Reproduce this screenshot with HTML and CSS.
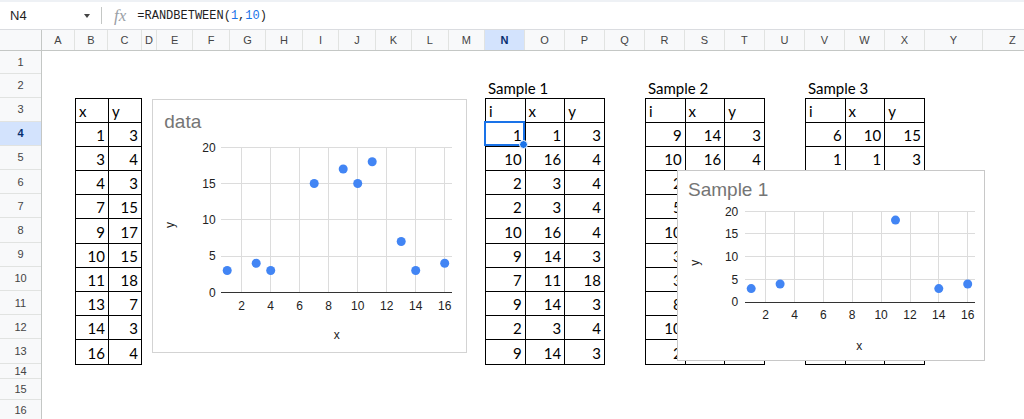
FILE: index.html
```html
<!DOCTYPE html>
<html lang="en">
<head>
<meta charset="utf-8">
<title>Sheet</title>
<link rel="stylesheet" href="styles.css">
</head>
<body>
<div class="topstrip"></div>
<div class="formula-bar">
  <div class="namebox"><span class="cellref">N4</span><span class="caret"></span></div>
  <div class="fsep"></div>
  <span class="fx">fx</span>
  <div class="formula">=RANDBETWEEN(<span class="num">1</span>,<span class="num">10</span>)</div>
</div>
<div class="sheet">
  <div class="corner"></div>
  <div class="colheads">
    <div class="ch">A</div><div class="ch">B</div><div class="ch">C</div><div class="ch">D</div>
    <div class="ch">E</div><div class="ch">F</div><div class="ch">G</div><div class="ch">H</div>
    <div class="ch">I</div><div class="ch">J</div><div class="ch">K</div><div class="ch">L</div>
    <div class="ch">M</div><div class="ch active">N</div><div class="ch">O</div><div class="ch">P</div>
    <div class="ch">Q</div><div class="ch">R</div><div class="ch">S</div><div class="ch">T</div>
    <div class="ch">U</div><div class="ch">V</div><div class="ch">W</div><div class="ch">X</div>
    <div class="ch">Y</div><div class="ch">Z</div>
  </div>
  <div class="rowheads">
    <div class="rh">1</div><div class="rh">2</div><div class="rh">3</div><div class="rh active">4</div>
    <div class="rh">5</div><div class="rh">6</div><div class="rh">7</div><div class="rh">8</div>
    <div class="rh">9</div><div class="rh">10</div><div class="rh">11</div><div class="rh">12</div>
    <div class="rh">13</div><div class="rh">14</div><div class="rh">15</div><div class="rh">16</div>
  </div>
  <div class="body">
    <table class="dt t-left">
      <tr><td class="h">x</td><td class="h">y</td></tr>
      <tr><td>1</td><td>3</td></tr>
      <tr><td>3</td><td>4</td></tr>
      <tr><td>4</td><td>3</td></tr>
      <tr><td>7</td><td>15</td></tr>
      <tr><td>9</td><td>17</td></tr>
      <tr><td>10</td><td>15</td></tr>
      <tr><td>11</td><td>18</td></tr>
      <tr><td>13</td><td>7</td></tr>
      <tr><td>14</td><td>3</td></tr>
      <tr><td>16</td><td>4</td></tr>
    </table>

    <div class="label l-s1">Sample 1</div>
    <table class="dt t-s1">
      <tr><td class="h">i</td><td class="h">x</td><td class="h">y</td></tr>
      <tr><td>1</td><td>1</td><td>3</td></tr>
      <tr><td>10</td><td>16</td><td>4</td></tr>
      <tr><td>2</td><td>3</td><td>4</td></tr>
      <tr><td>2</td><td>3</td><td>4</td></tr>
      <tr><td>10</td><td>16</td><td>4</td></tr>
      <tr><td>9</td><td>14</td><td>3</td></tr>
      <tr><td>7</td><td>11</td><td>18</td></tr>
      <tr><td>9</td><td>14</td><td>3</td></tr>
      <tr><td>2</td><td>3</td><td>4</td></tr>
      <tr><td>9</td><td>14</td><td>3</td></tr>
    </table>

    <div class="label l-s2">Sample 2</div>
    <table class="dt t-s2">
      <tr><td class="h">i</td><td class="h">x</td><td class="h">y</td></tr>
      <tr><td>9</td><td>14</td><td>3</td></tr>
      <tr><td>10</td><td>16</td><td>4</td></tr>
      <tr><td>2</td><td></td><td></td></tr>
      <tr><td>5</td><td></td><td></td></tr>
      <tr><td>10</td><td></td><td></td></tr>
      <tr><td>3</td><td></td><td></td></tr>
      <tr><td>3</td><td></td><td></td></tr>
      <tr><td>8</td><td></td><td></td></tr>
      <tr><td>10</td><td></td><td></td></tr>
      <tr><td>2</td><td></td><td></td></tr>
    </table>

    <div class="label l-s3">Sample 3</div>
    <table class="dt t-s3">
      <tr><td class="h">i</td><td class="h">x</td><td class="h">y</td></tr>
      <tr><td>6</td><td>10</td><td>15</td></tr>
      <tr><td>1</td><td>1</td><td>3</td></tr>
      <tr><td></td><td></td><td></td></tr>
      <tr><td></td><td></td><td></td></tr>
      <tr><td></td><td></td><td></td></tr>
      <tr><td></td><td></td><td></td></tr>
      <tr><td></td><td></td><td></td></tr>
      <tr><td></td><td></td><td></td></tr>
      <tr><td></td><td></td><td></td></tr>
      <tr><td></td><td></td><td></td></tr>
    </table>

    <div class="selection"><span class="handle"></span></div>

    <div class="chart chart-data">
      <svg width="313" height="252" viewBox="0 0 313 252">
        <text class="ctitle" x="11.3" y="28.3">data</text>
        <g class="grid">
          <line x1="68" x2="299" y1="47.5" y2="47.5"/>
          <line x1="68" x2="299" y1="83.5" y2="83.5"/>
          <line x1="68" x2="299" y1="119.5" y2="119.5"/>
          <line x1="68" x2="299" y1="156.5" y2="156.5"/>
          <line x1="88.5" x2="88.5" y1="47" y2="192"/>
          <line x1="117.5" x2="117.5" y1="47" y2="192"/>
          <line x1="146.5" x2="146.5" y1="47" y2="192"/>
          <line x1="175.5" x2="175.5" y1="47" y2="192"/>
          <line x1="204.5" x2="204.5" y1="47" y2="192"/>
          <line x1="233.5" x2="233.5" y1="47" y2="192"/>
          <line x1="262.5" x2="262.5" y1="47" y2="192"/>
          <line x1="291.5" x2="291.5" y1="47" y2="192"/>
        </g>
        <line class="axis" x1="68" x2="299" y1="192.5" y2="192.5"/>
        <g class="yl">
          <text x="62.7" y="51.5">20</text>
          <text x="62.7" y="87.7">15</text>
          <text x="62.7" y="124">10</text>
          <text x="62.7" y="160.2">5</text>
          <text x="62.7" y="196.5">0</text>
        </g>
        <g class="xl">
          <text x="88.7" y="210">2</text>
          <text x="117.7" y="210">4</text>
          <text x="146.7" y="210">6</text>
          <text x="175.7" y="210">8</text>
          <text x="204.7" y="210">10</text>
          <text x="233.7" y="210">12</text>
          <text x="262.7" y="210">14</text>
          <text x="291.7" y="210">16</text>
        </g>
        <text class="at" x="183.7" y="238.5">x</text>
        <text class="at" transform="translate(21,125) rotate(-90)">y</text>
        <g class="pts">
          <circle cx="74.2" cy="170.55" r="4.5"/>
          <circle cx="103.2" cy="163.3" r="4.5"/>
          <circle cx="117.7" cy="170.55" r="4.5"/>
          <circle cx="161.2" cy="83.55" r="4.5"/>
          <circle cx="190.2" cy="69.05" r="4.5"/>
          <circle cx="204.7" cy="83.55" r="4.5"/>
          <circle cx="219.2" cy="61.8" r="4.5"/>
          <circle cx="248.2" cy="141.55" r="4.5"/>
          <circle cx="262.7" cy="170.55" r="4.5"/>
          <circle cx="291.7" cy="163.3" r="4.5"/>
        </g>
      </svg>
    </div>

    <div class="chart chart-s1">
      <svg width="306" height="189" viewBox="0 0 306 189">
        <text class="ctitle" x="10" y="24.7">Sample 1</text>
        <g class="grid">
          <line x1="67" x2="297" y1="40.5" y2="40.5"/>
          <line x1="67" x2="297" y1="62.5" y2="62.5"/>
          <line x1="67" x2="297" y1="85.5" y2="85.5"/>
          <line x1="67" x2="297" y1="108.5" y2="108.5"/>
          <line x1="87.5" x2="87.5" y1="40" y2="131"/>
          <line x1="116.5" x2="116.5" y1="40" y2="131"/>
          <line x1="145.5" x2="145.5" y1="40" y2="131"/>
          <line x1="174.5" x2="174.5" y1="40" y2="131"/>
          <line x1="203.5" x2="203.5" y1="40" y2="131"/>
          <line x1="232.5" x2="232.5" y1="40" y2="131"/>
          <line x1="260.5" x2="260.5" y1="40" y2="131"/>
          <line x1="289.5" x2="289.5" y1="40" y2="131"/>
        </g>
        <line class="axis" x1="67" x2="297" y1="131.5" y2="131.5"/>
        <g class="yl">
          <text x="60.3" y="44.5">20</text>
          <text x="60.3" y="66.8">15</text>
          <text x="60.3" y="89.7">10</text>
          <text x="60.3" y="112.5">5</text>
          <text x="60.3" y="135.3">0</text>
        </g>
        <g class="xl">
          <text x="87.7" y="148">2</text>
          <text x="116.5" y="148">4</text>
          <text x="145.4" y="148">6</text>
          <text x="174.2" y="148">8</text>
          <text x="203.1" y="148">10</text>
          <text x="232" y="148">12</text>
          <text x="260.8" y="148">14</text>
          <text x="289.7" y="148">16</text>
        </g>
        <text class="at" x="181.3" y="178.5">x</text>
        <text class="at" transform="translate(21,91.7) rotate(-90)">y</text>
        <g class="pts">
          <circle cx="73.2" cy="117.6" r="4.5"/>
          <circle cx="102.1" cy="113" r="4.5"/>
          <circle cx="217.5" cy="49.1" r="4.5"/>
          <circle cx="260.8" cy="117.6" r="4.5"/>
          <circle cx="289.7" cy="113" r="4.5"/>
        </g>
      </svg>
    </div>
  </div>
</div>
</body>
</html>
```

FILE: styles.css
```css
* { box-sizing: border-box; }
html, body { margin: 0; padding: 0; }
body {
  width: 1024px;
  height: 419px;
  overflow: hidden;
  background: #fff;
  font-family: "Liberation Sans", Arial, sans-serif;
  color: #1f1f1f;
}

.topstrip { height: 2px; background: #eef1f5; }

.formula-bar {
  height: 28px;
  display: flex;
  align-items: center;
  border-bottom: 1px solid #dadce0;
}
.namebox {
  width: 101px;
  display: flex;
  align-items: center;
  padding-left: 10px;
}
.cellref { flex: 1; font-size: 13px; color: #1f1f1f; }
.caret {
  width: 0; height: 0;
  border-left: 3.5px solid transparent;
  border-right: 3.5px solid transparent;
  border-top: 4px solid #444;
  margin-right: 11px;
}
.fsep { width: 1px; height: 17px; background: #c4c7c5; }
.fx {
  font-family: "Liberation Serif", serif;
  font-style: italic;
  font-size: 17px;
  color: #9aa0a6;
  margin-left: 12px;
}
.formula {
  margin-left: 11px;
  font-family: "Liberation Mono", "DejaVu Sans Mono", monospace;
  font-size: 12px;
  color: #1f1f1f;
}
.num { color: #1a73e8; }

.sheet {
  --cols: 33px 33px 34px 15px repeat(9, 36.44px) repeat(11, 40px) 58px 60px;
  --rows: 23.25px 23.25px repeat(11, 24.2px) 15px 21px 21px;
  display: grid;
  grid-template-columns: 42px 1fr;
  grid-template-rows: 21px 1fr;
  height: 389px;
}
.corner {
  background: #f8f9fa;
  border-right: 1px solid #c4c7c5;
  border-bottom: 1px solid #c4c7c5;
}
.colheads {
  display: grid;
  grid-template-columns: var(--cols);
  background: #f8f9fa;
  border-bottom: 1px solid #c4c7c5;
  overflow: hidden;
}
.ch {
  border-right: 1px solid #e1e3e1;
  font-size: 11px;
  color: #444;
  display: flex;
  align-items: center;
  justify-content: center;
}
.ch.active, .rh.active {
  background: #d3e3fd;
  color: #062e6f;
  font-weight: bold;
}
.rowheads {
  display: grid;
  grid-template-rows: var(--rows);
  background: #f8f9fa;
  border-right: 1px solid #c4c7c5;
  overflow: hidden;
}
.rh {
  border-bottom: 1px solid #e1e3e1;
  font-size: 11px;
  color: #444;
  display: flex;
  align-items: center;
  justify-content: center;
}

.body {
  position: relative;
  display: grid;
  grid-template-columns: var(--cols);
  grid-template-rows: var(--rows);
  overflow: hidden;
  font-family: Lato, "Open Sans", sans-serif;
  font-size: 15px;
  color: #000;
}

.dt {
  border-collapse: collapse;
  table-layout: fixed;
  width: 100%;
  height: 100%;
}
.dt tr { height: 24.2px; }
.dt td {
  border: 1px solid #000;
  padding: 0 3px 3px;
  vertical-align: bottom;
  text-align: right;
  line-height: 1;
}
.dt td.h { text-align: left; }

.t-left { grid-column: 2 / 4; grid-row: 3 / 14; }
.t-s1 { grid-column: 14 / 17; grid-row: 3 / 14; }
.t-s2 { grid-column: 18 / 21; grid-row: 3 / 14; }
.t-s3 { grid-column: 22 / 25; grid-row: 3 / 14; }

.label {
  grid-row: 2;
  align-self: end;
  padding: 0 0 2px 3px;
  line-height: 1;
  white-space: nowrap;
}
.l-s1 { grid-column: 14 / 17; }
.l-s2 { grid-column: 18 / 21; }
.l-s3 { grid-column: 22 / 25; }

.selection {
  grid-column: 14;
  grid-row: 4;
  position: relative;
  z-index: 2;
  border: 2px solid #1a73e8;
  margin: -1px 0 0 -1px;
}
.handle {
  position: absolute;
  right: -5px;
  bottom: -5px;
  width: 9px;
  height: 9px;
  border-radius: 50%;
  background: #1a73e8;
  border: 1px solid #fff;
}

.chart {
  position: absolute;
  z-index: 3;
  background: #fff;
  border: 1px solid #d3d3d3;
}
.chart svg { display: block; font-family: "Liberation Sans", Arial, sans-serif; }
.chart-data { left: 110px; top: 48px; width: 315px; height: 254px; }
.chart-s1 { left: 635px; top: 119px; width: 308px; height: 191px; border-color: #c8c8c8; }

.ctitle { font-size: 19px; fill: #757575; }
.grid line { stroke: #dcdcdc; stroke-width: 1; }
.axis { stroke: #333; stroke-width: 1; }
.yl text { font-size: 12px; fill: #222; text-anchor: end; }
.xl text { font-size: 12px; fill: #222; text-anchor: middle; }
.at { font-size: 12px; fill: #222; text-anchor: middle; }
.pts circle { fill: #4285f4; }
```
